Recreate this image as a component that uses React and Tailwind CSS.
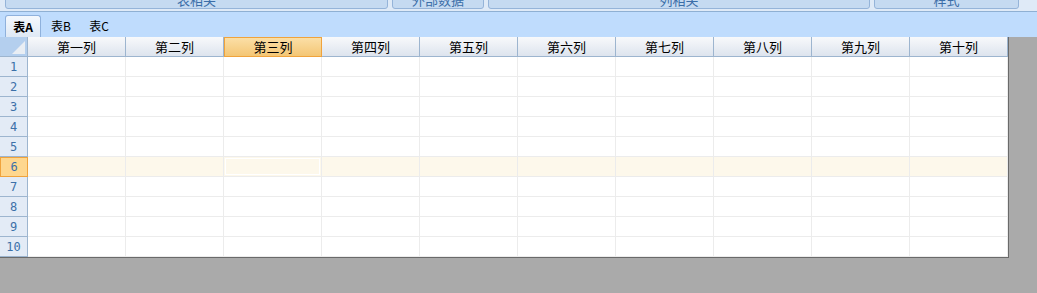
const cols = ['第一列', '第二列', '第三列', '第四列', '第五列', '第六列', '第七列', '第八列', '第九列', '第十列']
const rows = [1, 2, 3, 4, 5, 6, 7, 8, 9, 10]

const font = "font-['Noto_Sans_CJK_SC','Liberation_Sans',sans-serif]"

function ToolButton({ label, className }) {
  return (
    <div className={`h-[20px] -mt-[11px] flex items-end justify-center pb-[2px] bg-[#c5daf1] border border-[#95b4d9] rounded-b-[3px] text-[13px] leading-none text-[#3b6ea8] ${className}`}>
      {label}
    </div>
  )
}

export default function App() {
  return (
    <div className={`w-[1037px] h-[293px] bg-[#aaaaaa] overflow-hidden flex flex-col ${font}`}>
      {/* Toolbar (scrolled off) */}
      <div className="h-[12px] shrink-0 bg-[#dfeaf7] flex gap-[4px] pl-[5px] overflow-hidden border-b border-[#8fb0d3]">
        <ToolButton label="表相关" className="w-[383px]" />
        <ToolButton label="外部数据" className="w-[92px]" />
        <ToolButton label="列相关" className="w-[382px]" />
        <ToolButton label="样式" className="w-[145px]" />
      </div>

      {/* Sheet tabs */}
      <div className="h-[25px] shrink-0 bg-[#bfdcfd] flex items-end pl-[5px] gap-[2px] text-[12px] leading-none">
        <div className="h-[22px] w-[36px] flex items-center justify-center bg-gradient-to-b from-[#f4f8fd] to-[#dfe9f5] border border-b-0 border-[#8fb1dc] rounded-t-[3px] font-bold text-black">
          表A
        </div>
        <div className="h-[22px] w-[36px] flex items-center justify-center text-black">表B</div>
        <div className="h-[22px] w-[36px] flex items-center justify-center text-black">表C</div>
      </div>

      {/* Grid */}
      <div className="w-[1009px] bg-white border-r border-b border-[#6a6a6a] flex flex-col">
        <div className="flex h-[20px]">
          <div className="w-[28px] shrink-0 bg-[#b4cfee] border-r border-b border-[#9db5cf] relative">
            <div className="absolute right-[2px] bottom-[2px] w-0 h-0 border-l-[13px] border-l-transparent border-b-[13px] border-b-[#e9eef4]" />
          </div>
          {cols.map((c, i) => (
            <div
              key={c}
              className={
                i === 2
                  ? 'w-[98px] shrink-0 flex items-center justify-center text-[13px] text-black bg-gradient-to-b from-[#fbdfa6] to-[#f4c674] border border-[#f0a33c]'
                  : 'w-[98px] shrink-0 flex items-center justify-center text-[13px] text-black bg-gradient-to-b from-[#f8f9fb] to-[#dde4ee] border-r border-b border-[#9db5cf]'
              }
            >
              {c}
            </div>
          ))}
        </div>
        {rows.map((r) => (
          <div key={r} className={`flex h-[20px] ${r === 6 ? 'bg-[#fdf8eb]' : ''}`}>
            <div
              className={
                r === 6
                  ? "w-[28px] shrink-0 flex items-center justify-center text-[12px] text-[#3c70a8] bg-[#fed78f] border border-[#f0a33c] font-['DejaVu_Sans_Mono',monospace]"
                  : "w-[28px] shrink-0 flex items-center justify-center text-[12px] text-[#3c70a8] bg-[#e3ebf6] border-r border-b border-[#9db5cf] font-['DejaVu_Sans_Mono',monospace]"
              }
            >
              {r}
            </div>
            {cols.map((c, i) => (
              <div key={c} className="w-[98px] shrink-0 border-r border-b border-[#ececec] p-[1px]">
                {r === 6 && i === 2 && <div className="w-full h-full border border-white" />}
              </div>
            ))}
          </div>
        ))}
      </div>
    </div>
  )
}
